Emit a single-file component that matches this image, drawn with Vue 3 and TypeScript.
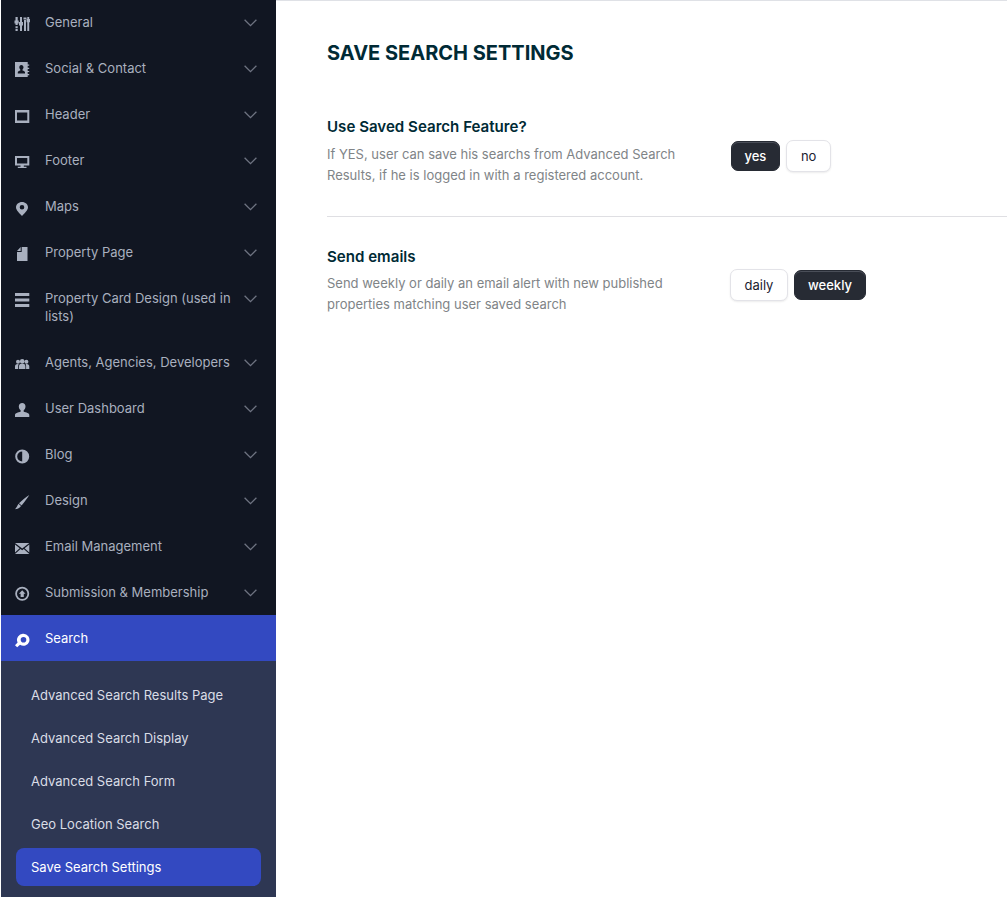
<script setup lang="ts">
interface MenuItem { label: string; icon: string; active?: boolean }

const menu: MenuItem[] = [
  { label: 'General', icon: 'sliders' },
  { label: 'Social & Contact', icon: 'contact' },
  { label: 'Header', icon: 'laptop' },
  { label: 'Footer', icon: 'monitor' },
  { label: 'Maps', icon: 'pin' },
  { label: 'Property Page', icon: 'file' },
  { label: 'Property Card Design (used in lists)', icon: 'bars' },
  { label: 'Agents, Agencies, Developers', icon: 'group' },
  { label: 'User Dashboard', icon: 'user' },
  { label: 'Blog', icon: 'contrast' },
  { label: 'Design', icon: 'brush' },
  { label: 'Email Management', icon: 'mail' },
  { label: 'Submission & Membership', icon: 'upload' },
  { label: 'Search', icon: 'search', active: true },
]

const submenu = [
  { label: 'Advanced Search Results Page', active: false },
  { label: 'Advanced Search Display', active: false },
  { label: 'Advanced Search Form', active: false },
  { label: 'Geo Location Search', active: false },
  { label: 'Save Search Settings', active: true },
]
</script>

<template>
  <div class="page">
    <aside class="sidebar">
      <ul class="menu">
        <li v-for="item in menu" :key="item.label" class="menu-item" :class="{ active: item.active }">
          <svg class="icon" viewBox="0 0 16 16" aria-hidden="true">
            <template v-if="item.icon === 'sliders'">
              <path d="M1.500 1h2.200v3.500h1v3h-1V9H1.500V7.500h-1v-3h1zM1.500 10.200h2.200v2H1.500zM1.500 13h2.200v2H1.500z" />
              <path d="M6 1h2v5h1v3.500H8V15H6V9.500H5V6h1z" />
              <path d="M10 4h2V15h-2zM9.500 1.500h3v2h-3z" />
              <path d="M13.300 1h1.900v2h.8v3.200h-.8V15h-1.900V6.200h-.7V3h.7z" />
            </template>
            <template v-else-if="item.icon === 'contact'">
              <path fill-rule="evenodd" d="M1 0h12.700v2.500H15.200v1.200h-1.500v2H15.200v1.200h-1.500v2H15.200v1.200h-1.500v2H15.200v1.200h-1.500V15H1zM7.300 3C6 3 5.300 4 5.300 5.300c0 1 .5 1.800 1 2.200v.9c-1.300.4-2.500.9-2.500 1.800v1.300h7.200v-1.300c0-.9-1.200-1.400-2.500-1.800v-.9c.5-.4 1-1.200 1-2.200C9.500 4 8.700 3 7.300 3z" />
            </template>
            <template v-else-if="item.icon === 'laptop'">
              <path fill-rule="evenodd" d="M1 2h14.300v13H1zM3 4.500V12.500h10.300V4.500z" />
            </template>
            <template v-else-if="item.icon === 'monitor'">
              <path fill-rule="evenodd" d="M1 2h14.300v9.500H9.800v1.300h2.700V14H3.800v-1.200h2.700v-1.300H1zM3 4v5.500h10.300V4z" />
            </template>
            <template v-else-if="item.icon === 'pin'">
              <path fill-rule="evenodd" d="M8 2c3.300 0 6 2.300 6 5.300 0 3-3.700 6.300-6 8.700-2.300-2.400-6-5.700-6-8.700C2 4.300 4.700 2 8 2zM8 5a2.300 2.300 0 1 0 0 4.600A2.300 2.300 0 0 0 8 5z" />
            </template>
            <template v-else-if="item.icon === 'file'">
              <path d="M7.700 1H13.500v14H3V6h4.700zM3 5l3.700-4v4z" />
            </template>
            <template v-else-if="item.icon === 'bars'">
              <path d="M1 1h14.300v3H1zM1 6.500h14.300v3H1zM1 12h14.300v3H1z" />
            </template>
            <template v-else-if="item.icon === 'group'">
              <circle cx="8.200" cy="5.300" r="2.300" />
              <circle cx="4" cy="5.800" r="2" />
              <circle cx="12.400" cy="5.800" r="2" />
              <path d="M5 13v-2.800c0-1.500 1.200-2.600 3.200-2.600s3.200 1.100 3.200 2.600V13zM1 13v-2.500c0-1.400.9-2.600 2.800-2.600.5 0 .7.100.9.200C4.300 8.700 4.200 9.400 4.200 10.100V13zM15.300 13v-2.500c0-1.400-.9-2.600-2.800-2.600-.5 0-.7.100-.9.200.4.600.5 1.300.5 2V13z" />
            </template>
            <template v-else-if="item.icon === 'user'">
              <path d="M8.200 1c2 0 3.300 1.400 3.300 3.500 0 1.500-.7 3-1.800 3.800v1.500c2.500.7 5.600 1.300 5.600 3.300V15H1v-1.900c0-2 3.100-2.600 5.600-3.300V8.300C5.500 7.500 4.800 6 4.800 4.500 4.800 2.400 6.200 1 8.200 1z" />
            </template>
            <template v-else-if="item.icon === 'contrast'">
              <path fill-rule="evenodd" d="M8.200 1.500a7 7 0 1 1 0 14 7 7 0 0 1 0-14zM8.200 3.500v10a5 5 0 0 1 0-10z" />
            </template>
            <template v-else-if="item.icon === 'brush'">
              <path d="M15.300 1c-2 3.200-4.600 6.800-7.700 10.400L5 9.200C8.300 6 11.800 3.300 15.300 1zM4.500 9.800l2.500 2.100C6 14 3.600 15 1 15.200c1.500-1.200 2.200-3.500 3.500-5.400z" />
            </template>
            <template v-else-if="item.icon === 'mail'">
              <path d="M1 3h14.300L8.200 8.600zM1 4.500l4.700 3.800L1 12.500zM15.300 4.500v8l-4.700-4.200zM6.500 9l1.700 1.300L9.800 9l5.500 5H1z" />
            </template>
            <template v-else-if="item.icon === 'upload'">
              <path fill-rule="evenodd" d="M8.200.8a7 7 0 1 1 0 14 7 7 0 0 1 0-14zM8.200 2.600a5.200 5.200 0 1 0 0 10.400 5.200 5.200 0 0 0 0-10.400zM8.200 4.200l3.300 3.500H9.800v3.300H6.600V7.700H4.900z" />
            </template>
            <template v-else-if="item.icon === 'search'">
              <path fill-rule="evenodd" d="M9.500 1.800a6 6 0 1 1-3.500 10.900L3.200 15.300 1 13.200l2.600-2.800A6 6 0 0 1 9.500 1.800zM9.500 5a2.800 2.800 0 1 0 0 5.600 2.800 2.800 0 0 0 0-5.600z" />
            </template>
          </svg>
          <span class="label">{{ item.label }}</span>
          <svg v-if="!item.active" class="chevron" viewBox="0 0 13 8" aria-hidden="true">
            <path d="M.6.800l5.900 5.900L12.400.800" />
          </svg>
        </li>
      </ul>
      <ul class="submenu">
        <li v-for="sub in submenu" :key="sub.label" class="sub-item" :class="{ active: sub.active }">{{ sub.label }}</li>
      </ul>
    </aside>

    <main class="content">
      <h1 class="title">Save Search Settings</h1>

      <section class="setting first">
        <div class="text">
          <h2>Use Saved Search Feature?</h2>
          <p>If YES, user can save his searchs from Advanced Search Results, if he is logged in with a registered account.</p>
        </div>
        <div class="options options-a">
          <button class="opt on">yes</button>
          <button class="opt">no</button>
        </div>
      </section>

      <section class="setting second">
        <div class="text">
          <h2>Send emails</h2>
          <p>Send weekly or daily an email alert with new published properties matching user saved search</p>
        </div>
        <div class="options options-b">
          <button class="opt">daily</button>
          <button class="opt on">weekly</button>
        </div>
      </section>
    </main>
  </div>
</template>

<style>
html, body { margin: 0; background: #fff; }
</style>

<style scoped>
* { box-sizing: border-box; }
.page {
  width: 1007px;
  height: 897px;
  overflow: hidden;
  display: flex;
  font-family: Inter, "Liberation Sans", sans-serif;
  background: #fff;
}
.sidebar {
  width: 275px;
  height: 897px;
  margin-left: 1px;
  flex: none;
  background: #2e3753;
  overflow: hidden;
}
.menu, .submenu { list-style: none; margin: 0; padding: 0; }
.menu { margin-top: -1px; background: #111622; }
.menu-item {
  display: flex;
  align-items: flex-start;
  padding: 14px 19px 14px 13px;
  font-size: 13px;
  line-height: 18px;
  color: #a9b0bf;
}
.menu-item.active { background: #3349c1; color: #fff; }
.icon {
  flex: none;
  width: 16px;
  height: 16px;
  margin: 3px 15px -1px 0;
  fill: currentColor;
}
.label { flex: 1; min-width: 0; padding-right: 5px; }
.chevron {
  flex: none;
  width: 13px;
  height: 8px;
  margin-top: 6px;
  fill: none;
  stroke: #6f7482;
  stroke-width: 1.300;
}
.submenu {
  padding: 15px 15px 0;
  display: flex;
  flex-direction: column;
  gap: 5px;
}
.sub-item {
  height: 38px;
  padding: 0 15px;
  border-radius: 8px;
  font-size: 13px;
  line-height: 38px;
  color: #dadde6;
}
.sub-item.active { background: #3349c1; color: #fff; }

.content {
  flex: 1;
  min-width: 0;
  padding: 0 0 0 51px;
}
.content::before {
  content: "";
  display: block;
  height: 1px;
  margin-left: -51px;
  background: #dfe1e6;
}
.title {
  margin: 40px 0 0;
  font-size: 20px;
  line-height: 24px;
  font-weight: 700;
  text-transform: uppercase;
  color: #002a35;
}
.setting {
  display: flex;
  align-items: flex-start;
}
.setting.first {
  margin-top: 52px;
  height: 100px;
  border-bottom: 1px solid #dfdfe3;
}
.setting.second { margin-top: 30px; }
.setting.second h2 { margin-bottom: 6px; }
.text { width: 403px; flex: none; }
.text h2 {
  margin: 0 0 7px;
  font-size: 15.100px;
  line-height: 20px;
  font-weight: 600;
  color: #002a35;
}
.text p {
  width: 360px;
  margin: 0;
  font-size: 13px;
  line-height: 21px;
  color: #808487;
}
.options { display: flex; align-items: center; gap: 6px; }
.options-a { margin-top: 23px; margin-left: 1px; }
.options-b { margin-top: 22px; }
.opt {
  font: inherit;
  font-size: 13px;
  line-height: 18px;
  height: 32px;
  padding: 0 13.500px;
  background: #fff;
  color: #1b2230;
  border: 1px solid #e3e3e8;
  border-radius: 7px;
  box-shadow: 0 1px 2px rgba(0, 0, 0, 0.08);
}
.options-a .opt { padding: 0 14px; }
.opt.on {
  height: 30px;
  padding: 0 13.100px;
  background: #272b34;
  border-color: #272b34;
  color: #fff;
  font-weight: 500;
  box-shadow: inset 0 1px 0 #4a4e58;
}
.options-a .opt.on { padding: 0 12.500px; }
</style>
